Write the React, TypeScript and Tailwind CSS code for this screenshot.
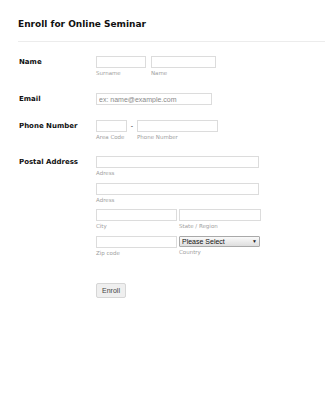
const inputCls =
  "block h-[12px] border border-[#dcdcdc] bg-white px-[2px] text-[7px] text-[#333] outline-none placeholder:text-[#8a8a8a] [font-family:'Liberation_Sans',Arial,sans-serif]"

const Sub = ({ children }: { children: React.ReactNode }) => (
  <div className="mt-[1px] h-[8px] text-[5.5px] leading-[8px] text-[#a0a0a0] [font-family:'DejaVu_Sans',Verdana,sans-serif]">
    {children}
  </div>
)

const Label = ({ children }: { children: React.ReactNode }) => (
  <div className="w-[77px] shrink-0 text-[7px] font-bold leading-[12px] text-[#111] [font-family:'DejaVu_Sans',Verdana,sans-serif]">
    {children}
  </div>
)

export default function App() {
  return (
    <div className="min-h-[400px] w-[325px] bg-white">
      <div className="pl-[18px] pt-[19px]">
        <h1 className="text-[9px] font-bold leading-[11px] text-[#111] [font-family:'DejaVu_Sans',Verdana,sans-serif]">
          Enroll for Online Seminar
        </h1>
        <div className="mt-[11px] h-px bg-[#ececec]" />
      </div>

      <form className="pl-[19px] pt-[14px]" onSubmit={(e) => e.preventDefault()}>
        {/* name */}
        <div className="mb-[16px] flex">
          <Label>Name</Label>
          <div className="flex gap-[5px]">
            <div>
              <input className={`${inputCls} w-[50px]`} />
              <Sub>Surname</Sub>
            </div>
            <div>
              <input className={`${inputCls} w-[65px]`} />
              <Sub>Name</Sub>
            </div>
          </div>
        </div>

        {/* email */}
        <div className="mb-[15px] flex">
          <Label>Email</Label>
          <input className={`${inputCls} w-[116px]`} placeholder="ex: name@example.com" />
        </div>

        {/* phone */}
        <div className="mb-[15px] flex">
          <Label>Phone Number</Label>
          <div className="flex">
            <div>
              <input className={`${inputCls} w-[31px]`} />
              <Sub>Area Code</Sub>
            </div>
            <div className="w-[10px] text-center text-[7px] leading-[12px] text-[#333] [font-family:'Liberation_Sans',Arial,sans-serif]">
              -
            </div>
            <div>
              <input className={`${inputCls} w-[81px]`} />
              <Sub>Phone Number</Sub>
            </div>
          </div>
        </div>

        {/* address */}
        <div className="flex">
          <Label>Postal Address</Label>
          <div className="flex flex-col gap-[6px]">
            <div>
              <input className={`${inputCls} w-[163px]`} />
              <Sub>Adress</Sub>
            </div>
            <div className="-mt-[0px]">
              <input className={`${inputCls} w-[163px]`} />
              <Sub>Adress</Sub>
            </div>
            <div className="-mt-[1px] flex gap-[2px]">
              <div>
                <input className={`${inputCls} w-[81px]`} />
                <Sub>City</Sub>
              </div>
              <div>
                <input className={`${inputCls} w-[82px]`} />
                <Sub>State / Region</Sub>
              </div>
            </div>
            <div className="flex gap-[2px]">
              <div>
                <input className={`${inputCls} w-[81px]`} />
                <Sub>Zip code</Sub>
              </div>
              <div>
                <div className="relative h-[11px] w-[81px]">
                  <select className="block h-[11px] w-[81px] appearance-none rounded-[1px] border border-[#a9a9a9] bg-gradient-to-b from-[#fafafa] to-[#dedede] pl-[2px] text-[7px] leading-[9px] text-[#111] outline-none [font-family:'Liberation_Sans',Arial,sans-serif]">
                    <option>Please Select</option>
                  </select>
                  <span className="pointer-events-none absolute right-[3px] top-[1px] text-[5px] leading-[9px] text-[#222]">
                    ▼
                  </span>
                </div>
                <Sub>Country</Sub>
              </div>
            </div>
          </div>
        </div>

        <div className="mt-[18px] pl-[77px]">
          <button
            type="submit"
            className="h-[15px] w-[30px] rounded-[2px] border border-[#d6d6d6] bg-[#efefef] text-[7px] leading-[13px] text-[#444] [font-family:'Liberation_Sans',Arial,sans-serif]"
          >
            Enroll
          </button>
        </div>
      </form>
    </div>
  )
}
